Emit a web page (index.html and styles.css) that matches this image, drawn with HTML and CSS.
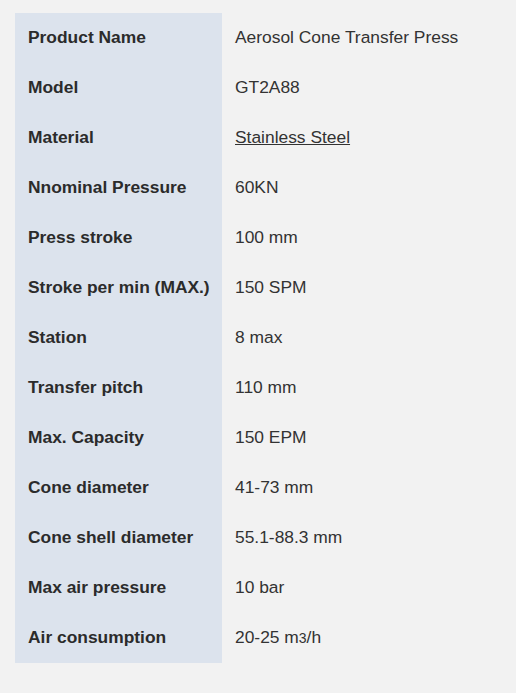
FILE: index.html
```html
<!DOCTYPE html>
<html>
<head>
<meta charset="utf-8">
<link rel="stylesheet" href="styles.css">
</head>
<body>
<table class="specs">
<colgroup><col class="col-label"><col class="col-value"></colgroup>
<tbody>
<tr><th>Product Name</th><td>Aerosol Cone Transfer Press</td></tr>
<tr><th>Model</th><td>GT2A88</td></tr>
<tr><th>Material</th><td><a href="#" class="link">Stainless Steel</a></td></tr>
<tr><th>Nnominal Pressure</th><td>60KN</td></tr>
<tr><th>Press stroke</th><td>100 mm</td></tr>
<tr><th>Stroke per min (MAX.)</th><td>150 SPM</td></tr>
<tr><th>Station</th><td>8 max</td></tr>
<tr><th>Transfer pitch</th><td>110 mm</td></tr>
<tr><th>Max. Capacity</th><td>150 EPM</td></tr>
<tr><th>Cone diameter</th><td>41-73 mm</td></tr>
<tr><th>Cone shell diameter</th><td>55.1-88.3 mm</td></tr>
<tr><th>Max air pressure</th><td>10 bar</td></tr>
<tr><th>Air consumption</th><td>20-25 m<span class="small">3</span>/h</td></tr>
</tbody>
</table>
</body>
</html>
```
FILE: styles.css
```css
html, body {
  margin: 0;
  padding: 0;
  background: #f2f2f2;
}
body {
  padding: 13px 15px;
  font-family: "Liberation Sans", Arial, sans-serif;
  font-size: 17.4px;
  color: #333333;
}
.specs {
  border-collapse: collapse;
  table-layout: fixed;
  width: 486px;
}
.col-label {
  width: 207px;
}
.specs th,
.specs td {
  height: 50px;
  padding: 0 0 2px 13px;
  vertical-align: middle;
  text-align: left;
  white-space: nowrap;
  box-sizing: border-box;
}
.specs th {
  background: #dce3ed;
  font-weight: bold;
  color: #2b2b2b;
}
.specs td {
  font-weight: normal;
}
.link {
  color: #333333;
  text-decoration: underline;
}
.small {
  font-size: 14px;
}
```
